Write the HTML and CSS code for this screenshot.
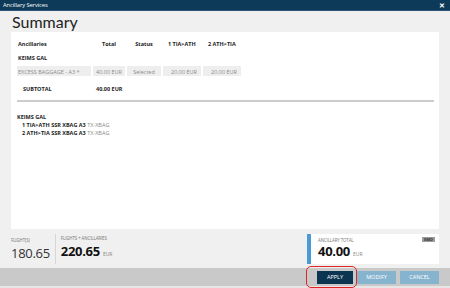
FILE: index.html
```html
<!DOCTYPE html>
<html lang="en">
<head>
    <meta charset="UTF-8">
    <title>Ancillary Services</title>
    <link rel="stylesheet" href="styles.css">
</head>
<body>
    <div class="window">
        <div class="titlebar">
            <span class="title">Ancillary Services</span>
            <span class="close">&#x2715;</span>
        </div>
        <div class="content">
            <h1 class="heading">Summary</h1>
            <div class="panel">
                <table class="summary">
                    <colgroup>
                        <col class="w1"><col class="w2"><col class="w3"><col class="w4"><col class="w5">
                    </colgroup>
                    <tr class="head">
                        <td>Ancillaries</td>
                        <td class="mid">Total</td>
                        <td class="mid">Status</td>
                        <td class="leg">1 TIA&gt;ATH</td>
                        <td class="leg">2 ATH&gt;TIA</td>
                    </tr>
                    <tr class="pax">
                        <td colspan="5">KEIMS GAL</td>
                    </tr>
                    <tr class="item">
                        <td>EXCESS BAGGAGE - A3 *</td>
                        <td class="mid">40.00 EUR</td>
                        <td class="mid">Selected</td>
                        <td class="amt">20.00 EUR</td>
                        <td class="amt">20.00 EUR</td>
                    </tr>
                    <tr class="subtotal">
                        <td class="sub-label">SUBTOTAL</td>
                        <td class="sub-amt">40.00 EUR</td>
                        <td colspan="3"></td>
                    </tr>
                </table>
                <div class="rule"></div>
                <div class="ssr">
                    <div class="ssr-name">KEIMS GAL</div>
                    <div class="ssr-line"><b>1 TIA&gt;ATH SSR XBAG A3</b> <span>TX-XBAG</span></div>
                    <div class="ssr-line"><b>2 ATH&gt;TIA SSR XBAG A3</b> <span>TX-XBAG</span></div>
                </div>
            </div>
            <div class="footer">
                <div class="fig">
                    <div class="fig-label">FLIGHT(S)</div>
                    <div class="fig-value">180.65</div>
                </div>
                <div class="fig fig-sep">
                    <div class="fig-label">FLIGHTS + ANCILLARIES</div>
                    <div class="fig-value strong">220.65 <small>EUR</small></div>
                </div>
                <div class="anc-total">
                    <div class="anc-top">
                        <span class="fig-label">ANCILLARY TOTAL</span>
                        <span class="emd">EMD</span>
                    </div>
                    <div class="fig-value strong">40.00 <small>EUR</small></div>
                </div>
            </div>
        </div>
        <div class="actions">
            <button class="btn btn-primary" type="button">APPLY</button>
            <button class="btn" type="button">MODIFY</button>
            <button class="btn" type="button">CANCEL</button>
            <span class="marker"></span>
        </div>
    </div>
</body>
</html>
```

FILE: styles.css
```css
body {
    margin: 0;
    font-family: "Open Sans", "Noto Sans", sans-serif;
    color: #222;
}
.window {
    width: 450px;
    height: 288px;
    display: flex;
    flex-direction: column;
    background-color: #f0f0f0;
    position: relative;
}
.titlebar {
    height: 11px;
    background-color: #0c3a58;
    border-bottom: 1px solid #2c5673;
    display: flex;
    align-items: center;
    justify-content: space-between;
    padding: 0 5px 0 3px;
    color: #fff;
    box-sizing: border-box;
}
.title {
    font-size: 5.8px;
    letter-spacing: -0.1px;
}
.close {
    font-size: 7px;
    font-weight: bold;
}
.content {
    flex: 1;
    padding: 0 11px;
    display: flex;
    flex-direction: column;
}
.heading {
    margin: 0;
    height: 21px;
    font-family: "Lato", sans-serif;
    font-weight: normal;
    font-size: 16px;
    line-height: 21px;
    padding-left: 1px;
    color: #222;
}
.panel {
    height: 197px;
    background-color: #fff;
    padding: 6px 5px 0 6px;
    box-sizing: border-box;
}
.summary {
    table-layout: fixed;
    width: 226px;
    border-collapse: separate;
    border-spacing: 2px 0;
    margin-left: -2px;
    font-size: 5.5px;
}
.w1 { width: 74px; }
.w2 { width: 32px; }
.w3 { width: 34px; }
.w4 { width: 38px; }
.w5 { width: 38px; }
.summary td {
    padding: 0 1px;
    white-space: nowrap;
    overflow: hidden;
}
.mid { text-align: center; }
.amt { text-align: right; padding-right: 4px !important; }
.leg { padding-left: 5px !important; }
.head td {
    height: 12px;
    font-weight: bold;
    color: #222;
}
.pax td {
    height: 16px;
    font-weight: bold;
}
.item td {
    height: 9px;
    background-color: #eeeeee;
    color: #8a8a8a;
    padding-top: 1px;
}
.subtotal td {
    height: 22px;
    padding-top: 2px;
    font-weight: bold;
}
.subtotal .sub-label { padding-left: 6px; }
.subtotal .sub-amt { padding-left: 3px; }
.rule {
    height: 2px;
    background-color: #cccccc;
    margin: 0;
}
.ssr {
    margin-top: 11px;
    font-size: 5.5px;
    line-height: 8px;
}
.ssr-name {
    font-weight: bold;
}
.ssr-line {
    padding-left: 5px;
}
.ssr-line span {
    color: #8a8a8a;
}
.footer {
    flex: 1;
    display: flex;
    align-items: center;
}
.fig {
    height: 30px;
    display: flex;
    flex-direction: column;
    justify-content: center;
    padding-right: 5px;
}
.fig-sep {
    border-left: 1px solid #d6d6d6;
    padding-left: 5px;
}
.fig-label {
    font-size: 4.4px;
    line-height: 6px;
    margin-bottom: 2px;
    color: #777;
    letter-spacing: -0.1px;
}
.fig-value {
    font-size: 13px;
    line-height: 16px;
    color: #333;
    letter-spacing: -0.3px;
}
.fig-value.strong {
    font-weight: bold;
    color: #111;
}
.fig-value small {
    font-size: 5px;
    font-weight: normal;
    color: #888;
    letter-spacing: 0;
}
.anc-total {
    margin-left: auto;
    width: 132px;
    height: 30px;
    box-sizing: border-box;
    background-color: #fff;
    border-left: 4px solid #4a9ad6;
    padding: 3px 4px 0 7px;
}
.anc-top {
    display: flex;
    justify-content: space-between;
    align-items: center;
}
.anc-top .fig-label {
    margin-bottom: 0;
}
.emd {
    font-size: 4px;
    font-weight: bold;
    background-color: #9c9c9c;
    color: #333;
    padding: 0 2px;
    line-height: 5px;
}
.actions {
    height: 20px;
    background-color: #c9c9c9;
    border-bottom: 2px solid #e6e6e6;
    box-sizing: border-box;
    display: flex;
    justify-content: flex-end;
    align-items: center;
    gap: 4px;
    padding: 0 11px 0 0;
}
.btn {
    height: 13px;
    width: 39px;
    border: none;
    margin: 0;
    padding: 0;
    font-family: "Open Sans", sans-serif;
    font-size: 5.5px;
    color: #fff;
    background-color: #86b4cf;
}
.btn-primary {
    width: 36px;
    background-color: #0c3552;
}
.marker {
    position: absolute;
    left: 306px;
    top: 266px;
    width: 49px;
    height: 20px;
    border: 1.5px solid #e02424;
    border-radius: 5px;
}
```
